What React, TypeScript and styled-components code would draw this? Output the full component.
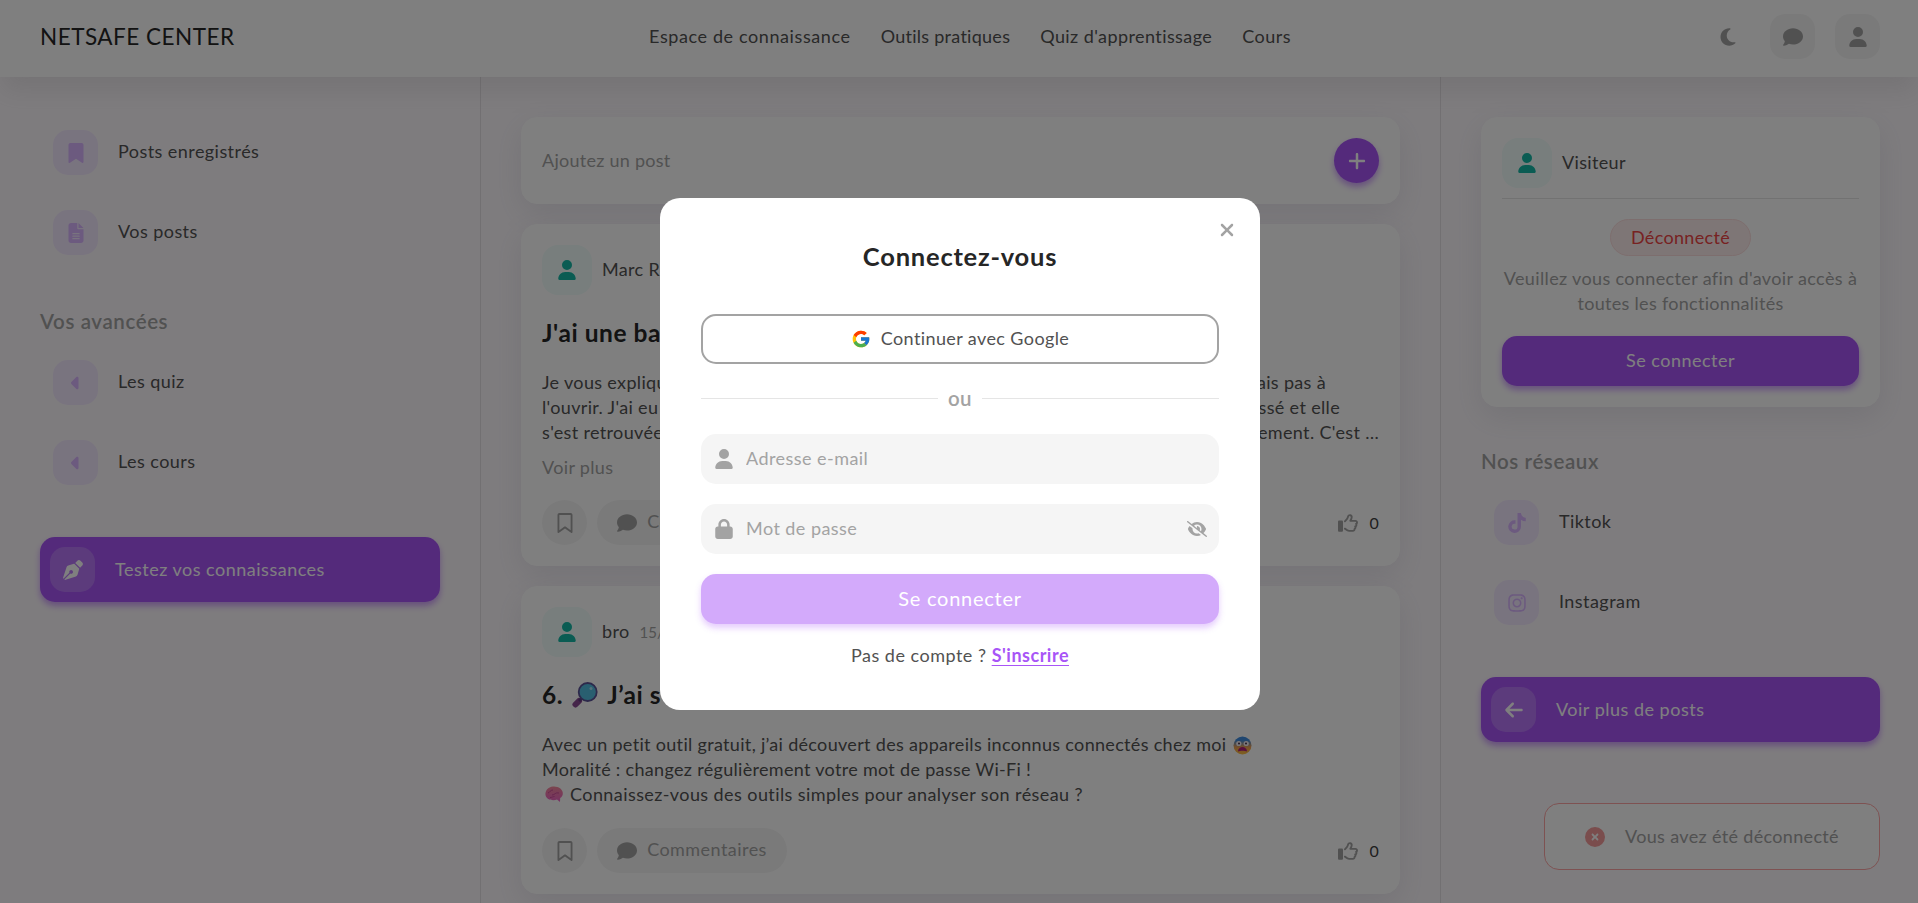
import React from "react";
import styled, { createGlobalStyle, css } from "styled-components";
import { FaBookmark, FaRegBookmark, FaFileLines, FaCaretLeft, FaPenNib, FaUser, FaComment, FaMoon, FaTiktok, FaInstagram, FaArrowLeft, FaPlus, FaXmark, FaLock, FaCircleXmark, FaRegThumbsUp, FaEyeSlash } from "react-icons/fa6";
import { FcGoogle } from "react-icons/fc";

const GlobalStyle = createGlobalStyle`
  * { box-sizing: border-box; margin: 0; padding: 0; }
  html, body, #root { height: 100%; }
  body {
    background: #fdf9fd;
    color: #525252;
    font-family: Lato, "Liberation Sans", sans-serif;
    font-size: 18px;
    line-height: 25px;
    letter-spacing: 0.34px;
    overflow: hidden;
  }
  button, input { font: inherit; letter-spacing: inherit; border: 0; }
  svg { flex-shrink: 0; display: block; }
`;

const Page = styled.div`
  height: 903px;
  overflow: hidden;
  display: flex;
  flex-direction: column;
`;

const Header = styled.header`
  height: 77px;
  flex-shrink: 0;
  display: grid;
  grid-template-columns: 1fr auto 1fr;
  padding: 14px 38px 18px 40px;
  align-items: center;
  background: #fff;
  position: relative;
  z-index: 1;
  box-shadow: 0 16px 25px -2px rgba(110, 105, 110, 0.12);
`;

const Brand = styled.div`
  font-size: 22.5px;
  color: #262626;
  letter-spacing: 0.5px;
`;

const Nav = styled.nav`
  display: flex;
  gap: 30px;
  margin-left: 20px;
`;

const NavItem = styled.span<{ $track: number }>`
  letter-spacing: ${(p) => p.$track}px;
`;

const HeaderActions = styled.div`
  display: flex;
  justify-content: flex-end;
  gap: 20px;
`;

const Label = styled.span<{ $track?: number }>`
  padding-bottom: 2px;
  letter-spacing: ${(p) => p.$track ?? 0.34}px;
`;

const IconBox = styled.span<{ $tone?: "plain" | "gray" | "purple" | "light" }>`
  width: 45px;
  height: 45px;
  border-radius: 15px;
  display: flex;
  align-items: center;
  justify-content: center;
  font-size: 20px;
  flex-shrink: 0;
  ${(p) =>
    p.$tone === "purple"
      ? css`background: #f3e8ff; color: #d8b4fe;`
      : p.$tone === "light"
      ? css`background: rgba(255, 255, 255, 0.2); color: #fff;`
      : p.$tone === "gray"
      ? css`background: #f5f5f5; color: #a3a3a3;`
      : css`color: #a3a3a3;`}
`;

const Columns = styled.div`
  flex: 1;
  min-height: 0;
  display: grid;
  grid-template-columns: 481px 1fr 477px;
`;

const Side = styled.aside<{ $edge?: boolean }>`
  padding: 40px 38px 0 40px;
  ${(p) => p.$edge && css`border-right: 1px solid #e5e0e5; padding-right: 40px;`}
`;

const Feed = styled.main`
  padding: 40px 40px 0;
  border-right: 1px solid #e5e0e5;
  display: flex;
  flex-direction: column;
  gap: 20px;
`;

const Links = styled.ul`
  list-style: none;
  display: flex;
  flex-direction: column;
  gap: 9px;
`;

const LinkRow = styled.li`
  display: flex;
  align-items: center;
  gap: 20px;
  padding: 13px;
`;

const SectionTitle = styled.h2<{ $top: number }>`
  font-size: 20.5px;
  font-weight: 600;
  letter-spacing: 0.6px;
  color: #a3a3a3;
  height: 30px;
  line-height: 28px;
  margin: ${(p) => p.$top}px 0 10px;
`;

const WideButton = styled.button<{ $top: number }>`
  width: 100%;
  height: 65px;
  margin-top: ${(p) => p.$top}px;
  padding: 0 10px;
  display: flex;
  align-items: center;
  gap: 20px;
  border-radius: 15px;
  color: #fff;
  background: #a855f7;
  box-shadow: 0 4px 6px rgba(168, 85, 247, 0.55);
`;

const WideLabel = styled.span`
  letter-spacing: 0.5px;
`;

const Card = styled.article`
  background: #fff;
  border: 1px solid #fff;
  border-radius: 16px;
  padding: 20px;
  flex-shrink: 0;
  box-shadow: 0 10px 30px rgba(90, 100, 120, 0.12);
`;

const Composer = styled(Card)`
  display: flex;
  align-items: center;
  justify-content: space-between;
  color: #a3a3a3;
  letter-spacing: 0.26px;
`;

const AddButton = styled.button`
  width: 45px;
  height: 45px;
  border-radius: 50%;
  background: #a855f7;
  color: #fff;
  font-size: 20px;
  display: grid;
  place-items: center;
  box-shadow: 0 4px 6px rgba(168, 85, 247, 0.55);
`;

const Author = styled.div`
  display: flex;
  align-items: center;
  gap: 10px;
  height: 50px;
  small { font-size: 15px; color: #a3a3a3; letter-spacing: 0; }
`;

const Avatar = styled.span`
  width: 50px;
  height: 50px;
  border-radius: 16px;
  background: #f0fdfa;
  color: #14b8a6;
  display: grid;
  place-items: center;
  font-size: 20px;
`;

const PostTitle = styled.h3`
  font-size: 24.5px;
  font-weight: 700;
  letter-spacing: 0.55px;
  color: #262626;
  height: 36px;
  line-height: 36px;
  margin: 20px 0;
  display: flex;
  align-items: center;
  gap: 9px;
  white-space: nowrap;
`;

const Line = styled.p<{ $track?: number }>`
  height: 25px;
  line-height: 23px;
  display: flex;
  align-items: flex-start;
  gap: 7px;
  white-space: pre;
  letter-spacing: ${(p) => p.$track ?? 0.34}px;
`;

const SplitLine = styled(Line)<{ $right: number }>`
  justify-content: space-between;
  padding-right: ${(p) => p.$right}px;
`;

const More = styled.p`
  color: #a3a3a3;
  margin-top: 9px;
`;

const PostFooter = styled.footer`
  display: flex;
  align-items: center;
  gap: 10px;
  margin-top: 20px;
  color: #a3a3a3;
`;

const Chip = styled.button<{ $round?: boolean }>`
  height: 45px;
  width: ${(p) => (p.$round ? "45px" : "190px")};
  border-radius: 23px;
  background: #f5f5f5;
  color: #a3a3a3;
  display: flex;
  align-items: center;
  justify-content: center;
  gap: 10px;
  svg { font-size: 20px; }
`;

const Likes = styled.span`
  margin-left: auto;
  display: flex;
  align-items: center;
  gap: 11px;
  color: #404040;
  font-size: 16px;
  svg { color: #a3a3a3; font-size: 20px; }
`;

const VisitorHead = styled(Author)`
  height: 61px;
  padding-bottom: 10px;
  border-bottom: 1px solid #e5e5e5;
`;

const VisitorBody = styled.div`
  display: flex;
  flex-direction: column;
  align-items: center;
  color: #a3a3a3;
  text-align: center;
  padding: 20px 0;
`;

const VisitorLine = styled(Line)`
  line-height: 25px;
`;

const Badge = styled.span`
  height: 37px;
  line-height: 35px;
  padding: 0 20px;
  border-radius: 19px;
  border: 1px solid #fbdcdc;
  background: #fdeded;
  color: #ef4444;
  margin-bottom: 10px;
`;

const PrimaryButton = styled.button<{ $soft?: boolean }>`
  width: 100%;
  height: 50px;
  padding-bottom: 2px;
  border-radius: 15px;
  color: #fff;
  background: ${(p) => (p.$soft ? "#d3aafb" : "#a855f7")};
  box-shadow: 0 4px 6px rgba(168, 85, 247, ${(p) => (p.$soft ? 0.3 : 0.55)});
  font-size: ${(p) => (p.$soft ? 20 : 18)}px;
  letter-spacing: ${(p) => (p.$soft ? 0.75 : 0.5)}px;
`;

const Toast = styled.div`
  position: fixed;
  right: 38px;
  bottom: 33px;
  width: 336px;
  height: 67px;
  display: flex;
  align-items: center;
  gap: 20px;
  padding-left: 40px;
  border: 1px solid #fca5a5;
  border-radius: 15px;
  background: #fefefe;
  color: #a3a3a3;
  svg { color: #f59a9a; font-size: 20px; }
`;

const Overlay = styled.div`
  position: fixed;
  inset: 0;
  z-index: 5;
  background: rgba(0, 0, 0, 0.5);
  display: flex;
  justify-content: center;
  align-items: flex-start;
  padding: 198px 0 0 2px;
`;

const Modal = styled.section`
  width: 600px;
  height: 512px;
  border-radius: 20px;
  background: #fff;
  padding: 40px 41px;
  position: relative;
`;

const Close = styled.button`
  position: absolute;
  top: 22px;
  right: 23px;
  background: none;
  color: #a3a3a3;
  font-size: 20px;
`;

const ModalTitle = styled.h1`
  font-size: 25.5px;
  line-height: 36px;
  font-weight: 700;
  letter-spacing: 0.78px;
  color: #262626;
  text-align: center;
`;

const GoogleButton = styled.button`
  width: 100%;
  height: 50px;
  margin-top: 40px;
  border: 2px solid #a3a3a3;
  border-radius: 15px;
  background: #fff;
  color: #525252;
  display: flex;
  align-items: center;
  justify-content: center;
  gap: 10px;
  svg { font-size: 20px; }
`;

const Separator = styled.div`
  display: flex;
  align-items: center;
  gap: 10px;
  height: 30px;
  margin: 19px 0 21px;
  font-size: 20.5px;
  font-weight: 600;
  color: #a3a3a3;
  &::before, &::after { content: ""; flex: 1; height: 1px; background: #e5e5e5; }
`;

const Field = styled.label`
  height: 50px;
  margin-bottom: 20px;
  padding: 0 12px 0 13px;
  display: flex;
  align-items: center;
  gap: 12px;
  border-radius: 15px;
  background: #f5f5f5;
  color: #a3a3a3;
  font-size: 20px;
  input { flex: 1; min-width: 0; background: none; font-size: 18px; padding-bottom: 2px; letter-spacing: 0.45px; }
  input::placeholder { color: #a3a3a3; opacity: 1; }
`;

const SignUp = styled.p`
  margin-top: 19px;
  text-align: center;
  letter-spacing: 0.5px;
  a { color: #a855f7; font-weight: 700; text-decoration: underline; text-underline-offset: 3px; }
`;

const Magnifier = () => (
  <svg width="26" height="26" viewBox="0 0 26 26">
    <path d="M3.5 22.5 L7 19" stroke="#8b4a94" strokeWidth="6" strokeLinecap="round" />
    <path d="M7 19 L10 16" stroke="#5f3d80" strokeWidth="3" />
    <circle cx="15.7" cy="10" r="9" fill="#52bfe0" stroke="#5a5296" strokeWidth="1.8" />
    <circle cx="19" cy="6.5" r="1.5" fill="#a9e4f5" />
  </svg>
);

const BrainIcon = styled.svg`
  margin: 3px 0 0 3px;
`;

const Brain = () => (
  <BrainIcon width="18" height="17" viewBox="0 0 18 17">
    <defs>
      <linearGradient id="brain" x1="0" y1="0" x2="0" y2="1">
        <stop offset="0" stopColor="#f58a9c" />
        <stop offset="1" stopColor="#ee62c8" />
      </linearGradient>
    </defs>
    <path d="M.5 9C0 5 3 1 8 .6c5-.5 9.500 2.400 9.800 6.400.2 2.500-1 4-2.600 5L15 16l-3-2.400C8 15 1.200 14 .5 9Z" fill="url(#brain)" />
    <path d="M3 7c2-.5 2-3 5-3M7 9c3 0 3-3 7-2M5 11.500c2 0 3-1 4.500-1" fill="none" stroke="#c94a98" strokeWidth=".9" />
  </BrainIcon>
);

const FearIcon = styled.svg`
  margin-top: 3px;
`;

const Fear = () => (
  <FearIcon width="19" height="19" viewBox="0 0 19 19">
    <defs>
      <linearGradient id="fear" x1="0" y1="0" x2="0" y2="1">
        <stop offset="0.2" stopColor="#3e8ce0" />
        <stop offset="0.6" stopColor="#f0a050" />
        <stop offset="1" stopColor="#ffc040" />
      </linearGradient>
    </defs>
    <circle cx="9.500" cy="9.500" r="9" fill="url(#fear)" />
    <circle cx="5.800" cy="7.500" r="2.600" fill="#f5eff5" />
    <circle cx="13.200" cy="7.500" r="2.600" fill="#f5eff5" />
    <circle cx="6" cy="7.500" r="1" fill="#4a3040" />
    <circle cx="13" cy="7.500" r="1" fill="#4a3040" />
    <path d="M5 15.500c0-6 9-6 9 0-2-1-7-1-9 0Z" fill="#b0207a" />
  </FearIcon>
);

const SideLink = ({ icon, label }: { icon: React.ReactNode; label: string }) => (
  <LinkRow>
    <IconBox $tone="purple">{icon}</IconBox>
    <Label $track={0.44}>{label}</Label>
  </LinkRow>
);

const Actions = () => (
  <PostFooter>
    <Chip $round><FaRegBookmark /></Chip>
    <Chip><FaComment /><Label $track={0.45}>Commentaires</Label></Chip>
    <Likes><FaRegThumbsUp />0</Likes>
  </PostFooter>
);

export default function App() {
  return (
    <Page>
      <GlobalStyle />
      <Header>
        <Brand>NETSAFE CENTER</Brand>
        <Nav>
          <NavItem $track={0.6}>Espace de connaissance</NavItem>
          <NavItem $track={0.27}>Outils pratiques</NavItem>
          <NavItem $track={0.42}>Quiz d'apprentissage</NavItem>
          <NavItem $track={0.45}>Cours</NavItem>
        </Nav>
        <HeaderActions>
          <IconBox><FaMoon /></IconBox>
          <IconBox $tone="gray"><FaComment /></IconBox>
          <IconBox $tone="gray"><FaUser /></IconBox>
        </HeaderActions>
      </Header>
      <Columns>
        <Side $edge>
          <Links>
            <SideLink icon={<FaBookmark />} label="Posts enregistrés" />
            <SideLink icon={<FaFileLines />} label="Vos posts" />
          </Links>
          <SectionTitle $top={39}>Vos avancées</SectionTitle>
          <Links>
            <SideLink icon={<FaCaretLeft />} label="Les quiz" />
            <SideLink icon={<FaCaretLeft />} label="Les cours" />
          </Links>
          <WideButton $top={39}>
            <IconBox $tone="light"><FaPenNib /></IconBox>
            <WideLabel>Testez vos connaissances</WideLabel>
          </WideButton>
        </Side>
        <Feed>
          <Composer>Ajoutez un post<AddButton><FaPlus /></AddButton></Composer>
          <Card>
            <Author><Avatar><FaUser /></Avatar><Label>Marc R</Label></Author>
            <PostTitle>J'ai une ba</PostTitle>
            <SplitLine $right={53}><span>Je vous expliqu</span><span>ais pas à</span></SplitLine>
            <SplitLine $right={39}><span>l'ouvrir. J'ai eu</span><span>ssé et elle</span></SplitLine>
            <SplitLine $right={0}><span>s'est retrouvée</span><span>lement. C'est …</span></SplitLine>
            <More>Voir plus</More>
            <Actions />
          </Card>
          <Card>
            <Author><Avatar><FaUser /></Avatar><Label>bro</Label><small>15/</small></Author>
            <PostTitle>6. <Magnifier /> J’ai s</PostTitle>
            <Line $track={0.32}>Avec un petit outil gratuit, j’ai découvert des appareils inconnus connectés chez moi<Fear /></Line>
            <Line $track={0.31}>Moralité : changez régulièrement votre mot de passe Wi-Fi !</Line>
            <Line $track={0.42}><Brain />Connaissez-vous des outils simples pour analyser son réseau ?</Line>
            <Actions />
          </Card>
        </Feed>
        <Side>
          <Card>
            <VisitorHead><Avatar><FaUser /></Avatar><Label>Visiteur</Label></VisitorHead>
            <VisitorBody>
              <Badge>Déconnecté</Badge>
              <VisitorLine $track={0.36}>Veuillez vous connecter afin d'avoir accès à</VisitorLine>
              <VisitorLine $track={0.3}>toutes les fonctionnalités</VisitorLine>
            </VisitorBody>
            <PrimaryButton>Se connecter</PrimaryButton>
          </Card>
          <SectionTitle $top={40}>Nos réseaux</SectionTitle>
          <Links>
            <SideLink icon={<FaTiktok />} label="Tiktok" />
            <SideLink icon={<FaInstagram />} label="Instagram" />
          </Links>
          <WideButton $top={39}>
            <IconBox $tone="light"><FaArrowLeft /></IconBox>
            <WideLabel>Voir plus de posts</WideLabel>
          </WideButton>
        </Side>
      </Columns>
      <Toast><FaCircleXmark />Vous avez été déconnecté</Toast>
      <Overlay>
        <Modal>
          <Close><FaXmark /></Close>
          <ModalTitle>Connectez-vous</ModalTitle>
          <GoogleButton><FcGoogle /><Label $track={0.4}>Continuer avec Google</Label></GoogleButton>
          <Separator>ou</Separator>
          <Field><FaUser /><input placeholder="Adresse e-mail" /></Field>
          <Field><FaLock /><input placeholder="Mot de passe" /><FaEyeSlash /></Field>
          <PrimaryButton $soft>Se connecter</PrimaryButton>
          <SignUp>Pas de compte ? <a>S'inscrire</a></SignUp>
        </Modal>
      </Overlay>
    </Page>
  );
}
